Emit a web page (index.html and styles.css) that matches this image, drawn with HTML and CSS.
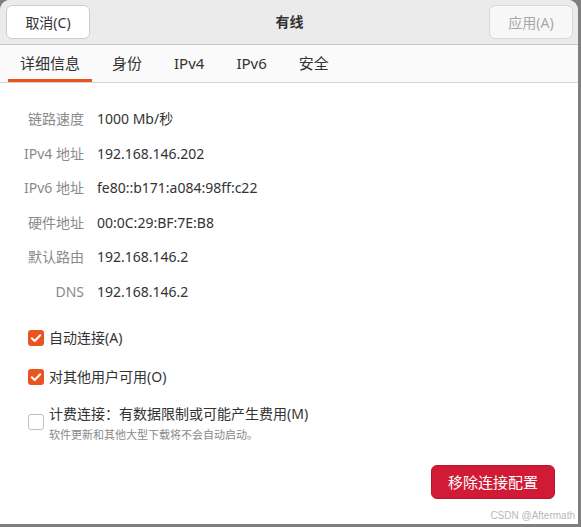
FILE: index.html
```html
<!DOCTYPE html>
<html>
<head>
<meta charset="utf-8">
<link rel="stylesheet" href="styles.css">
</head>
<body>
<div class="window">
  <header class="headerbar">
    <button class="btn cancel">取消(C)</button>
    <div class="title">有线</div>
    <button class="btn apply" disabled>应用(A)</button>
  </header>
  <nav class="tabs">
    <div class="tab active">详细信息</div>
    <div class="tab">身份</div>
    <div class="tab">IPv4</div>
    <div class="tab">IPv6</div>
    <div class="tab">安全</div>
  </nav>
  <main class="content">
    <div class="details">
      <div class="label">链路速度</div><div class="value">1000 Mb/秒</div>
      <div class="label">IPv4 地址</div><div class="value">192.168.146.202</div>
      <div class="label">IPv6 地址</div><div class="value">fe80::b171:a084:98ff:c22</div>
      <div class="label">硬件地址</div><div class="value">00:0C:29:BF:7E:B8</div>
      <div class="label">默认路由</div><div class="value">192.168.146.2</div>
      <div class="label">DNS</div><div class="value">192.168.146.2</div>
    </div>
    <div class="checks">
      <div class="check">
        <span class="box on"><svg viewBox="0 0 16 16" width="16" height="16"><path d="M3.8 8.2 L6.7 11 L12.2 5.2" fill="none" stroke="#fff" stroke-width="2" stroke-linecap="round" stroke-linejoin="round"/></svg></span>
        <span class="ctext">自动连接(A)</span>
      </div>
      <div class="check">
        <span class="box on"><svg viewBox="0 0 16 16" width="16" height="16"><path d="M3.8 8.2 L6.7 11 L12.2 5.2" fill="none" stroke="#fff" stroke-width="2" stroke-linecap="round" stroke-linejoin="round"/></svg></span>
        <span class="ctext">对其他用户可用(O)</span>
      </div>
      <div class="check metered">
        <span class="box off"></span>
        <div class="ctext-wrap">
          <div class="ctext">计费连接：有数据限制或可能产生费用(M)</div>
          <div class="sub">软件更新和其他大型下载将不会自动启动。</div>
        </div>
      </div>
    </div>
    <div class="actions">
      <button class="btn danger">移除连接配置</button>
    </div>
    <div class="watermark">CSDN @Aftermath</div>
  </main>
</div>
</body>
</html>
```

FILE: styles.css
```css
* { box-sizing: border-box; }
html, body { margin: 0; padding: 0; }
body {
  width: 581px;
  height: 527px;
  background: #7f7f7f;
  font-family: "Noto Sans", "Noto Sans CJK SC", sans-serif;
  overflow: hidden;
}
.window {
  width: 578px;
  height: 524px;
  background: #ffffff;
  border-radius: 10px 10px 0 0;
  overflow: hidden;
  display: flex;
  flex-direction: column;
}
.headerbar {
  height: 45px;
  flex: none;
  background: #ebebeb;
  border-bottom: 1px solid #c8c8c8;
  display: grid;
  grid-template-columns: 1fr auto 1fr;
  align-items: start;
  padding: 5px 5px 0 6px;
}
.btn {
  font-family: "Noto Sans", "Noto Sans CJK SC", sans-serif;
  font-size: 14px;
  height: 34px;
  border-radius: 6px;
  border: 1px solid #cdcdcd;
  background: #ffffff;
  color: #333333;
  padding: 0;
}
.cancel { width: 84px; justify-self: start; }
.apply { width: 84px; justify-self: end; background: #f7f7f7; color: #a8a8a8; border-color: #d8d8d8; }
.title {
  font-size: 14px;
  font-weight: bold;
  color: #333;
  line-height: 34px;
}
.tabs {
  height: 38px;
  flex: none;
  background: #fafafa;
  border-bottom: 1px solid #d2d2d2;
  display: flex;
  gap: 8px;
  padding-left: 8px;
}
.tab {
  padding: 0 12px;
  font-size: 15px;
  color: #333;
  line-height: 36px;
  border-bottom: 3px solid transparent;
}
.tab.active { border-bottom-color: #e95420; }
.content {
  flex: 1;
  position: relative;
  display: flex;
  flex-direction: column;
}
.details {
  display: grid;
  grid-template-columns: 84px auto;
  column-gap: 13px;
  row-gap: 14.6px;
  padding-top: 26px;
  font-size: 14px;
  line-height: 20px;
}
.label { text-align: right; color: #8a8a8a; }
.value { color: #333; }
.checks {
  display: flex;
  flex-direction: column;
  gap: 19px;
  padding-left: 28px;
  margin-top: 26px;
}
.check { display: flex; align-items: center; gap: 5px; }
.check.metered { align-items: flex-start; margin-top: -2px; }
.box {
  width: 16px;
  height: 16px;
  border-radius: 3px;
  flex: none;
  display: block;
}
.box svg { display: block; }
.box.on { background: #e95420; }
.box.off { border: 1px solid #c0c0c0; background: #fff; margin-top: 10px; }
.ctext { font-size: 14px; color: #333; line-height: 20px; }
.sub { font-size: 11px; color: #8a8a8a; line-height: 14px; margin-top: 4px; }
.actions {
  display: flex;
  justify-content: flex-end;
  padding-right: 23px;
  margin-top: 23px;
}
.danger {
  width: 124px;
  height: 34px;
  background: #d11a35;
  border-color: #b8142b;
  color: #fff;
  font-size: 15px;
}
.watermark {
  position: absolute;
  right: 3px;
  bottom: 3px;
  font-size: 10px;
  color: #b8b8b8;
  font-family: "Liberation Sans", sans-serif;
}
```
